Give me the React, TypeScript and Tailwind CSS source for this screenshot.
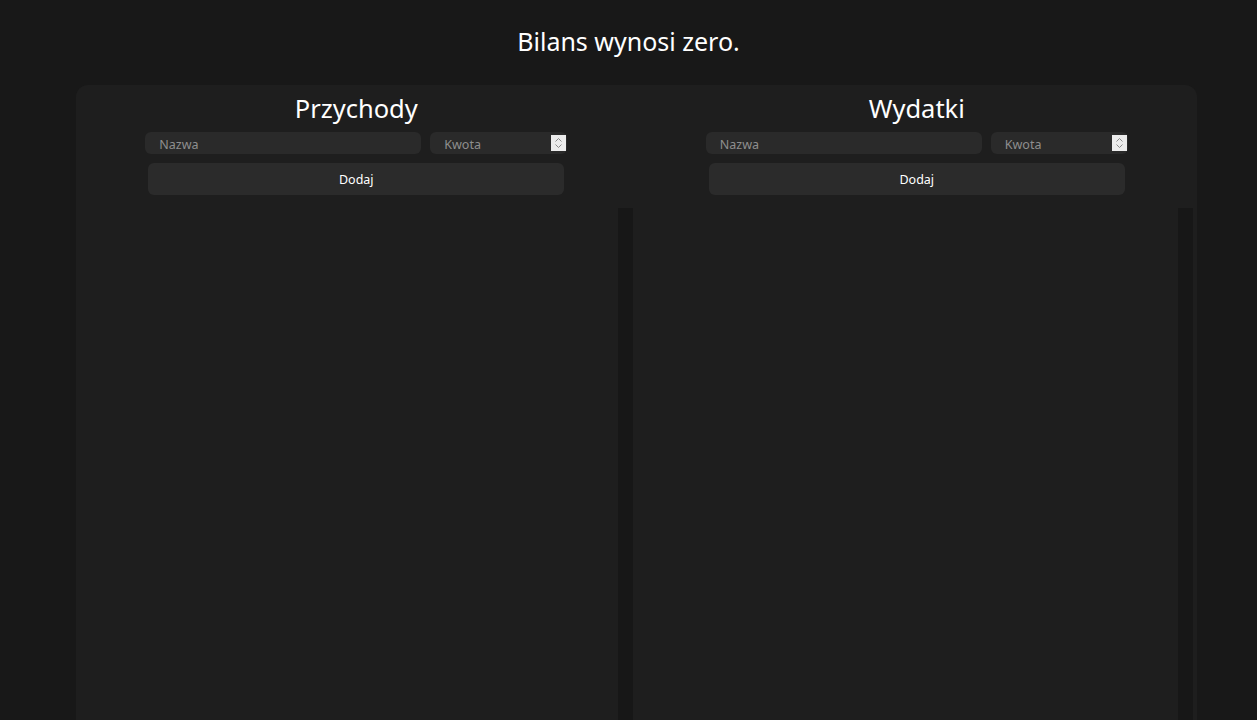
const FONT = "font-['Segoe_UI','Noto_Sans','Open_Sans',sans-serif]";

const Spinner = () => (
    <div className="absolute right-[1px] top-[3px] h-[16px] w-[15px] bg-[#ececec] flex items-center justify-center">
        <svg width="9" height="12" viewBox="0 0 9 12" fill="none" stroke="#8a8a8a" strokeWidth="1">
            <polyline points="1.5,4.5 4.5,1.5 7.5,4.5" />
            <polyline points="1.5,7.5 4.5,10.5 7.5,7.5" />
        </svg>
    </div>
);

const Column = ({ title }: { title: string }) => (
    <div className="flex flex-col items-center min-w-0">
        <h2 className="text-[25.5px] leading-[34px] text-white mt-[6px]">{title}</h2>
        <div className="flex items-start gap-[9px] mt-[7px] h-[22px]">
            <input
                placeholder="Nazwa"
                className="block w-[276px] h-[22px] rounded-[6px] bg-[#2a2a2a] pl-[14px] pt-[2px] text-[12.5px] text-white placeholder:text-[#8e8e8e] outline-none"
            />
            <div className="relative flex">
                <input
                    placeholder="Kwota"
                    className="block w-[137px] h-[22px] rounded-[6px] bg-[#2a2a2a] pl-[14px] pt-[2px] text-[12.5px] text-white placeholder:text-[#8e8e8e] outline-none"
                />
                <Spinner />
            </div>
        </div>
        <button className="mt-[9px] w-[416px] h-[32px] rounded-[6px] bg-[#2b2b2b] pt-[3px] text-[12.5px] font-normal text-white">
            Dodaj
        </button>
        <div className="mt-[13px] self-start w-[calc(100%-4px)] flex h-[600px]">
            <div className="flex-1" />
            <div className="w-[15px] bg-[#171717]" />
        </div>
    </div>
);

export default function App() {
    return (
        <div className={`h-screen overflow-hidden bg-[#181818] ${FONT}`}>
            <h1 className="h-[85px] flex items-center justify-center text-[25px] text-white pb-[2px]">
                Bilans wynosi zero.
            </h1>
            <div className="mx-[76px] w-[1121px] rounded-[12px] bg-[#1e1e1e] grid grid-cols-2">
                <Column title="Przychody" />
                <Column title="Wydatki" />
            </div>
        </div>
    );
}
